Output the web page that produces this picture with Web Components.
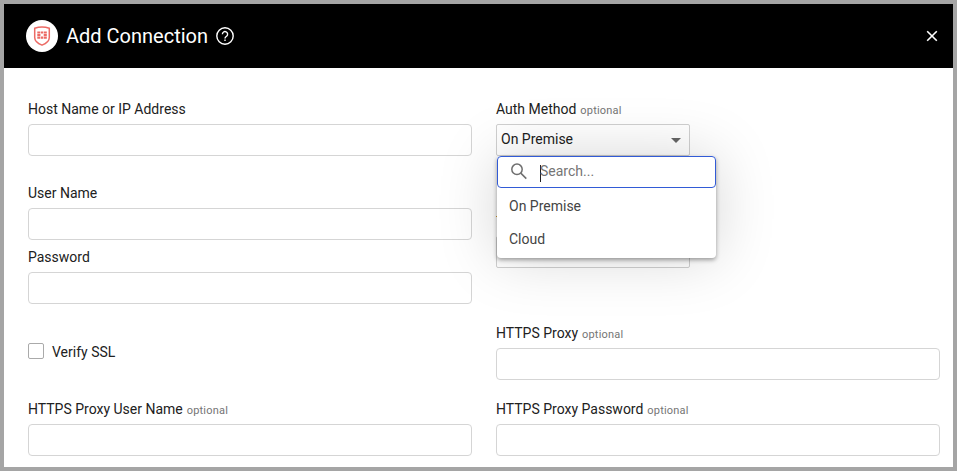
<!DOCTYPE html>
<html lang="en">
<head>
<meta charset="utf-8">
<title>Add Connection</title>
<style>
html, body { margin: 0; height: 100%; }
body { font: 14px/16px Roboto, "Liberation Sans", sans-serif; color: #212121; background: #fff; overflow: hidden; }
.columns { display: grid; grid-template-columns: 444px 444px; column-gap: 24px; padding: 33px 0 0 24px; }
.column { display: flex; flex-direction: column; }
.g12 { margin-top: 9px; }
.g32 { margin-top: 29px; }
.check { margin-top: 39px; }
.after-check { margin-top: 42px; }
.second { margin-top: 57px; }
.proxy { margin-top: 57px; }
.proxy-pass { margin-top: 21px; }
</style>
</head>
<body>
<connection-dialog>
  <dialog-header slot="header">Add Connection</dialog-header>
  <div class="columns">
    <div class="column">
      <text-field label="Host Name or IP Address"></text-field>
      <text-field class="g32" label="User Name"></text-field>
      <text-field class="g12" label="Password"></text-field>
      <check-box class="check">Verify SSL</check-box>
      <text-field class="after-check" label="HTTPS Proxy User Name" optional></text-field>
    </div>
    <div class="column">
      <select-field label="Auth Method" optional value="On Premise">
        <option-menu slot="menu">
          <menu-option>On Premise</menu-option>
          <menu-option>Cloud</menu-option>
        </option-menu>
      </select-field>
      <select-field class="second" marked></select-field>
      <text-field class="proxy" label="HTTPS Proxy" optional></text-field>
      <text-field class="proxy-pass" label="HTTPS Proxy Password" optional></text-field>
    </div>
  </div>
</connection-dialog>
<script>
function define(name, html, setup) {
  customElements.define(name, class extends HTMLElement {
    constructor() {
      super();
      const t = document.createElement('template');
      t.innerHTML = html;
      this.attachShadow({ mode: 'open' }).append(t.content.cloneNode(true));
    }
    connectedCallback() { if (setup) setup(this, this.shadowRoot); }
  });
}

define('connection-dialog', `
<style>
:host { display: block; box-sizing: border-box; height: 100%; border: 4px solid #a5a5a5; background: #fff; overflow: hidden; }
</style>
<slot name="header"></slot><slot></slot>`);

define('dialog-header', `
<style>
:host { display: flex; align-items: center; box-sizing: border-box; height: 64px; padding: 0 14px 0 22px; background: #000; color: #fff; }
svg { display: block; flex: none; }
h1 { margin: 0 7px 0 8px; font: 400 20px/24px Roboto, "Liberation Sans", sans-serif; letter-spacing: 0; white-space: nowrap; }
.close { margin-left: auto; }
</style>
<svg width="32" height="32" viewBox="0 0 32 32" fill="none">
  <circle cx="16" cy="16" r="16" fill="#fff"/>
  <path d="M8.7 8.3Q16 5.5 23.3 8.3V17.5Q23.3 22.3 16 25.1Q8.7 22.3 8.7 17.5Z" stroke="#ec6a64" stroke-width="1.5"/>
  <path fill="#ec6a64" d="M11.3 11.4h2.8v2.1h-2.8zM14.7 11.4h2.7v2.1h-2.7zM18 11.4h2.8v2.1h-2.8zM11.3 14h3.1v2.1h-3.1zM17.7 14h3.1v2.1h-3.1zM11.3 16.6h2.8v2.1h-2.8zM14.7 16.6h2.7v2.1h-2.7zM18 16.6h2.8v2.1h-2.8z"/>
</svg>
<h1><slot></slot></h1>
<svg width="20" height="20" viewBox="0 0 20 20" fill="none" stroke="#fff" stroke-width="1.4">
  <circle cx="10" cy="10" r="8.2"/>
  <path d="M7.4 8.2a2.6 2.6 0 1 1 4.2 2c-1 .7-1.6 1.1-1.6 2.2"/>
  <path d="M10 13.5v1.5"/>
</svg>
<svg class="close" width="14" height="14" viewBox="0 0 14 14" stroke="#fff" stroke-width="1.6"><path d="M2.2 2.2l9.6 9.6M11.8 2.2l-9.6 9.6"/></svg>`);

define('field-label', `
<style>
:host { display: block; height: 16px; margin-bottom: 7px; white-space: nowrap; }
.opt { font-size: 11px; letter-spacing: .2px; color: #757575; margin-left: 1px; }
</style><slot></slot>`, (el, root) => {
  if (el.hasAttribute('optional')) {
    const s = document.createElement('span');
    s.className = 'opt';
    s.textContent = ' optional';
    root.append(s);
  }
});

function fillLabel(el, root) {
  const label = root.querySelector('field-label');
  const text = el.getAttribute('label') || '';
  label.textContent = text;
  if (el.hasAttribute('optional')) {
    const copy = document.createElement('field-label');
    copy.setAttribute('optional', '');
    copy.textContent = text;
    label.replaceWith(copy);
  }
}

define('text-field', `
<style>
:host { display: block; }
.box { box-sizing: border-box; height: 32px; border: 1px solid #d5d5d5; border-radius: 4px; background: #fff; }
</style>
<field-label></field-label><div class="box"></div>`, fillLabel);

define('check-box', `
<style>
:host { display: flex; align-items: center; gap: 8px; height: 16px; }
.box { box-sizing: border-box; width: 16px; height: 16px; border: 1px solid #aaa; border-radius: 2px; }
.text { padding-top: 2px; }
</style>
<span class="box"></span><span class="text"><slot></slot></span>`);

define('select-field', `
<style>
:host { display: block; position: relative; width: 194px; }
.box { display: flex; align-items: center; justify-content: space-between; box-sizing: border-box; height: 32px; padding: 0 8px 2px 4px; border: 1px solid #d0d0d0; border-radius: 2px; background: #fff; }
.box i { margin-top: 2px; border: 5px solid transparent; border-top-color: #666; border-bottom: 0; }
:host([marked])::before { content: ""; position: absolute; left: 0; top: 3px; width: 2px; height: 1px; background: #d9a22e; }
</style>
<field-label></field-label><div class="box"><span></span><i></i></div><slot name="menu"></slot>`, (el, root) => {
  fillLabel(el, root);
  root.querySelector('span').textContent = el.getAttribute('value') || '';
});

define('option-menu', `
<style>
:host { display: block; position: absolute; z-index: 2; left: 1px; top: 55px; box-sizing: border-box; width: 219px; height: 102px; background: #fff; border-radius: 4px; box-shadow: 0 2px 4px rgba(0,0,0,.36), 0 0 60px rgba(0,0,0,.17); color: #444; }
.search { display: flex; align-items: center; box-sizing: border-box; height: 32px; padding-left: 11px; border: 1px solid #325bd6; border-radius: 4px; color: #757575; }
.search svg { margin-bottom: 1px; }
.caret { width: 1px; height: 17px; margin: 2px -1px 0 11px; background: #222; }
.hint { padding-bottom: 2px; }
</style>
<div class="search">
  <svg width="20" height="20" viewBox="0 0 20 20" fill="none" stroke="#6f6f6f" stroke-width="1.5"><circle cx="8" cy="7.3" r="5.2"/><path d="M11.8 11.1l5.5 5.5"/></svg>
  <span class="caret"></span><span class="hint">Search...</span>
</div>
<slot></slot>`);

define('menu-option', `
<style>
:host { display: flex; align-items: center; height: 33px; padding: 2px 12px 0; box-sizing: border-box; }
</style><slot></slot>`);
</script>
</body>
</html>
